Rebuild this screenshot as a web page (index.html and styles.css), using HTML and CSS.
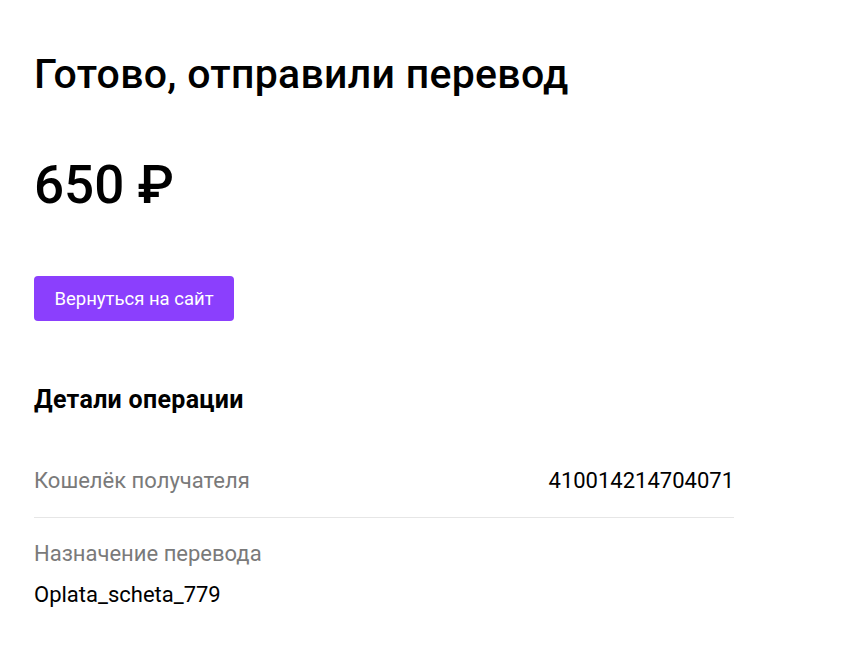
FILE: index.html
```html
<!DOCTYPE html>
<html>
    <head>
        <meta charset="utf-8">
        <title>Перевод отправлен</title>
        <meta name="viewport" content="width=device-width, initial-scale=1.0" />
        <link rel="stylesheet" href="styles.css">
    </head>
    <body>
        <div class="page">
            <h1 class="title">Готово, отправили перевод</h1>

            <div class="amount">650 ₽</div>

            <a class="back-btn" href="#">Вернуться на сайт</a>

            <h2 class="details-title">Детали операции</h2>

            <div class="details">
                <div class="row row-inline">
                    <span class="label">Кошелёк получателя</span>
                    <span class="value">410014214704071</span>
                </div>
                <div class="row">
                    <div class="label">Назначение перевода</div>
                    <div class="value">Oplata_scheta_779</div>
                </div>
            </div>
        </div>
    </body>
</html>
```

FILE: styles.css
```css
body {
  margin: 0;
  background: #fff;
  color: #000;
  font-family: Roboto, "Noto Sans", sans-serif;
}
.page {
  width: 700px;
  padding: 48px 34px 0 34px;
}
.title {
  margin: 0;
  font-size: 41px;
  font-weight: 500;
  line-height: 52px;
  letter-spacing: 0.3px;
}
.amount {
  margin-top: 53px;
  font-size: 53px;
  font-weight: 500;
  line-height: 64px;
}
.back-btn {
  display: inline-flex;
  align-items: center;
  justify-content: center;
  margin-top: 59px;
  width: 200px;
  height: 45px;
  background: #8b3ffd;
  border-radius: 4px;
  color: #fff;
  font-size: 18.5px;
  text-decoration: none;
}
.details-title {
  margin: 64px 0 0 0;
  font-size: 25px;
  font-weight: 700;
  line-height: 30px;
  letter-spacing: 0.3px;
}
.details {
  margin-top: 52px;
}
.row {
  font-size: 22px;
  line-height: 28px;
}
.row-inline {
  display: flex;
  justify-content: space-between;
  padding-bottom: 22px;
  border-bottom: 1px solid #e6e6e6;
}
.row + .row {
  padding-top: 22px;
}
.label {
  color: #7a7a7a;
}
.row .label + .value {
  margin-top: 13px;
}
.row-inline .label + .value {
  margin-top: 0;
}
```
